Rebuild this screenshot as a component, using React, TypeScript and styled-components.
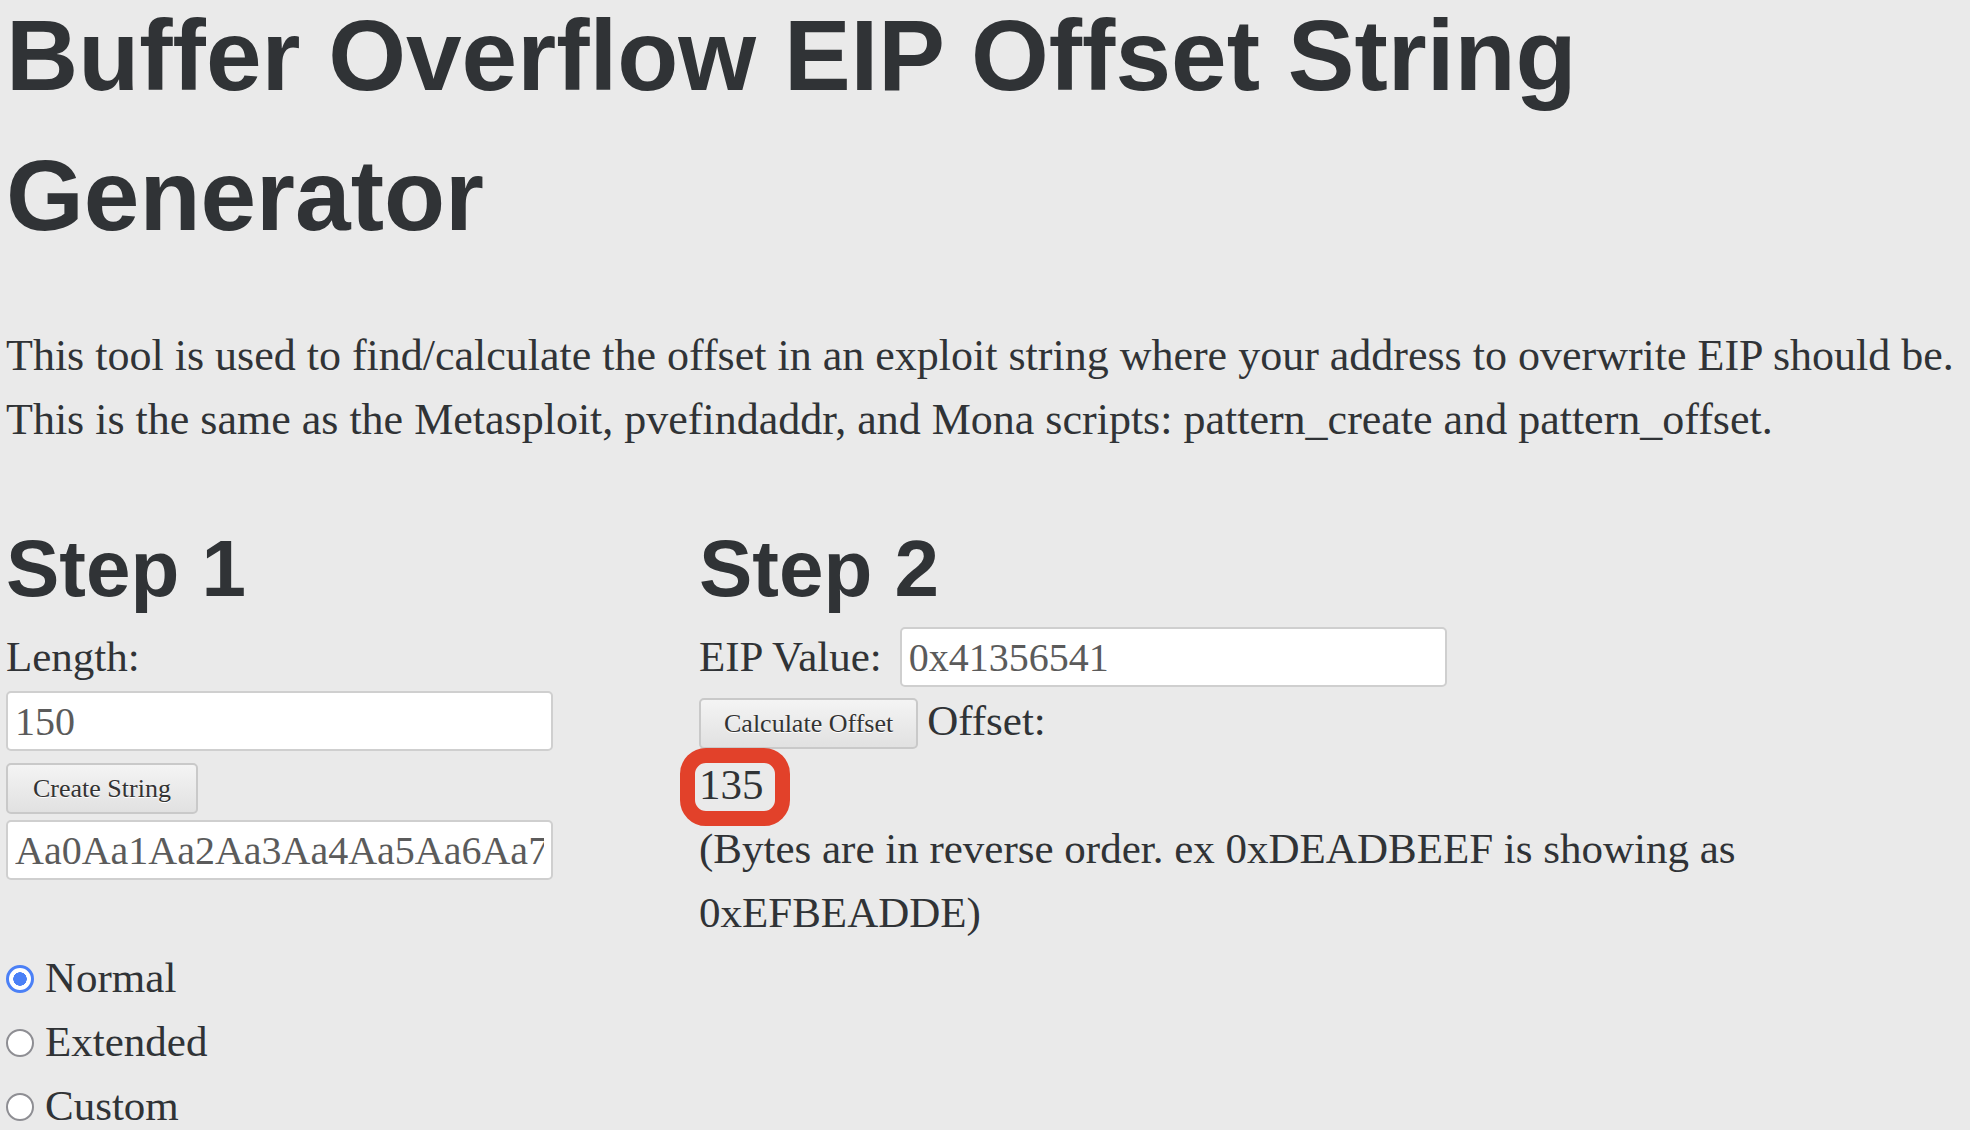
import React, {useState} from 'react';
import styled, {createGlobalStyle} from 'styled-components';

const GlobalStyle = createGlobalStyle`
  body {
    margin: 0;
    background: #eaeaea;
    color: #303336;
    font-family: "Liberation Serif", "Times New Roman", serif;
  }
`

const makePattern = (length: number) => {
    const upper = 'ABCDEFGHIJKLMNOPQRSTUVWXYZ'
    const lower = 'abcdefghijklmnopqrstuvwxyz'
    const digits = '0123456789'
    let out = ''
    for (const u of upper) {
        for (const l of lower) {
            for (const d of digits) {
                if (out.length >= length) return out.slice(0, length)
                out += u + l + d
            }
        }
    }
    return out.slice(0, length)
}

const findOffset = (eip: string) => {
    const hex = eip.replace(/^0x/i, '')
    if (hex.length !== 8) return -1
    let chunk = ''
    for (let i = hex.length - 2; i >= 0; i -= 2) {
        chunk += String.fromCharCode(parseInt(hex.slice(i, i + 2), 16))
    }
    return makePattern(20280).indexOf(chunk)
}

export default function App() {
    const [length, setLength] = useState('150')
    const [pattern, setPattern] = useState(makePattern(150))
    const [eip, setEip] = useState('0x41356541')
    const [offset, setOffset] = useState(135)
    const [mode, setMode] = useState('normal')

    return (
        <Page>
            <GlobalStyle/>
            <Title>Buffer Overflow EIP Offset String Generator</Title>
            <Intro>
                This tool is used to find/calculate the offset in an exploit string where your address to overwrite EIP should be.<br/>
                This is the same as the Metasploit, pvefindaddr, and Mona scripts: pattern_create and pattern_offset.
            </Intro>
            <Columns>
                <StepOne>
                    <StepTitle>Step 1</StepTitle>
                    <Label>Length:</Label>
                    <Field value={length} onChange={e => setLength(e.target.value)}/>
                    <Button onClick={() => setPattern(makePattern(Number(length) || 0))}>Create String</Button>
                    <Field $gap={6} value={pattern} readOnly/>
                    <Modes>
                        {['Normal', 'Extended', 'Custom'].map(m => (
                            <ModeRow key={m}>
                                <Radio type="radio" name="mode" checked={mode === m.toLowerCase()}
                                       onChange={() => setMode(m.toLowerCase())}/>
                                {m}
                            </ModeRow>
                        ))}
                    </Modes>
                </StepOne>
                <StepTwo>
                    <StepTitle>Step 2</StepTitle>
                    <Row $gap={18}>
                        <Label>EIP Value:</Label>
                        <Field $gap={0} value={eip} onChange={e => setEip(e.target.value)}/>
                    </Row>
                    <Row $gap={9}>
                        <Button $gap={5} $pad={23} onClick={() => setOffset(findOffset(eip))}>Calculate Offset</Button>
                        <Label>Offset:</Label>
                    </Row>
                    <Line><Result>{offset}</Result></Line>
                    <Line>
                        (Bytes are in reverse order. ex 0xDEADBEEF is showing as<br/>
                        0xEFBEADDE)
                    </Line>
                </StepTwo>
            </Columns>
        </Page>
    );
}

const Page = styled.div`
  padding-left: 6px;
  overflow: hidden;`

const Title = styled.h1`
  margin: -15px 0 0;
  font-family: "Liberation Sans", Arial, sans-serif;
  font-weight: 700;
  font-size: 100px;
  line-height: 140px;
  color: #303336;`

const Intro = styled.p`
  margin: 59px 0 0;
  font-size: 44px;
  line-height: 64px;
  white-space: nowrap;`

const Columns = styled.div`
  display: flex;
  margin-top: 68px;`

const StepOne = styled.div`
  width: 693px;
  display: flex;
  flex-direction: column;
  align-items: flex-start;`

const StepTwo = styled.div`
  flex: 1;
  display: flex;
  flex-direction: column;
  align-items: flex-start;`

const StepTitle = styled.h2`
  margin: 0 0 7px;
  font-family: "Liberation Sans", Arial, sans-serif;
  font-weight: 700;
  font-size: 80px;
  line-height: 98px;
  color: #303336;`

const Label = styled.div`
  font-size: 43px;
  line-height: 64px;`

const Field = styled.input<{ $gap?: number }>`
  box-sizing: border-box;
  width: 547px;
  height: 60px;
  margin: ${props => props.$gap ?? 2}px 0 0;
  padding: 0 7px;
  background: #fff;
  border: 2px solid #cfcfcf;
  border-radius: 5px;
  font-family: "Liberation Serif", "Times New Roman", serif;
  font-size: 40px;
  color: #5b5b5b;
  outline: none;`

const Button = styled.button<{ $gap?: number, $pad?: number }>`
  box-sizing: border-box;
  height: 51px;
  margin-top: ${props => props.$gap ?? 12}px;
  padding: 0 ${props => props.$pad ?? 25}px;
  border: 2px solid #c9c9c9;
  border-radius: 5px;
  background: linear-gradient(#f4f4f4, #e1e1e1);
  font-family: "Liberation Serif", "Times New Roman", serif;
  font-size: 26px;
  color: #333;
  text-shadow: 0 1px 0 #fff;
  cursor: pointer;`

const Modes = styled.div`
  margin-top: 65px;`

const ModeRow = styled.label`
  display: flex;
  align-items: center;
  gap: 11px;
  height: 64px;
  font-size: 43px;`

const Radio = styled.input`
  appearance: none;
  box-sizing: border-box;
  width: 28px;
  height: 28px;
  margin: 3px 0 0;
  border-radius: 50%;
  border: 2px solid #8e8e93;
  background: #fff;

  &:checked {
    border: 3px solid #4b80f6;
    background: radial-gradient(circle, #4b80f6 0 6.5px, #fff 7px);
  }`

const Row = styled.div<{ $gap?: number }>`
  display: flex;
  align-items: center;
  gap: ${props => props.$gap ?? 12}px;
  height: 64px;`

const Line = styled.div`
  font-size: 43px;
  line-height: 64px;
  white-space: nowrap;`

const Result = styled.span`
  position: relative;
  display: inline-block;

  &::after {
    content: "";
    position: absolute;
    left: -19px;
    top: -5px;
    width: 110px;
    height: 78px;
    box-sizing: border-box;
    border: 15px solid #e2412a;
    border-radius: 26px;
  }`
